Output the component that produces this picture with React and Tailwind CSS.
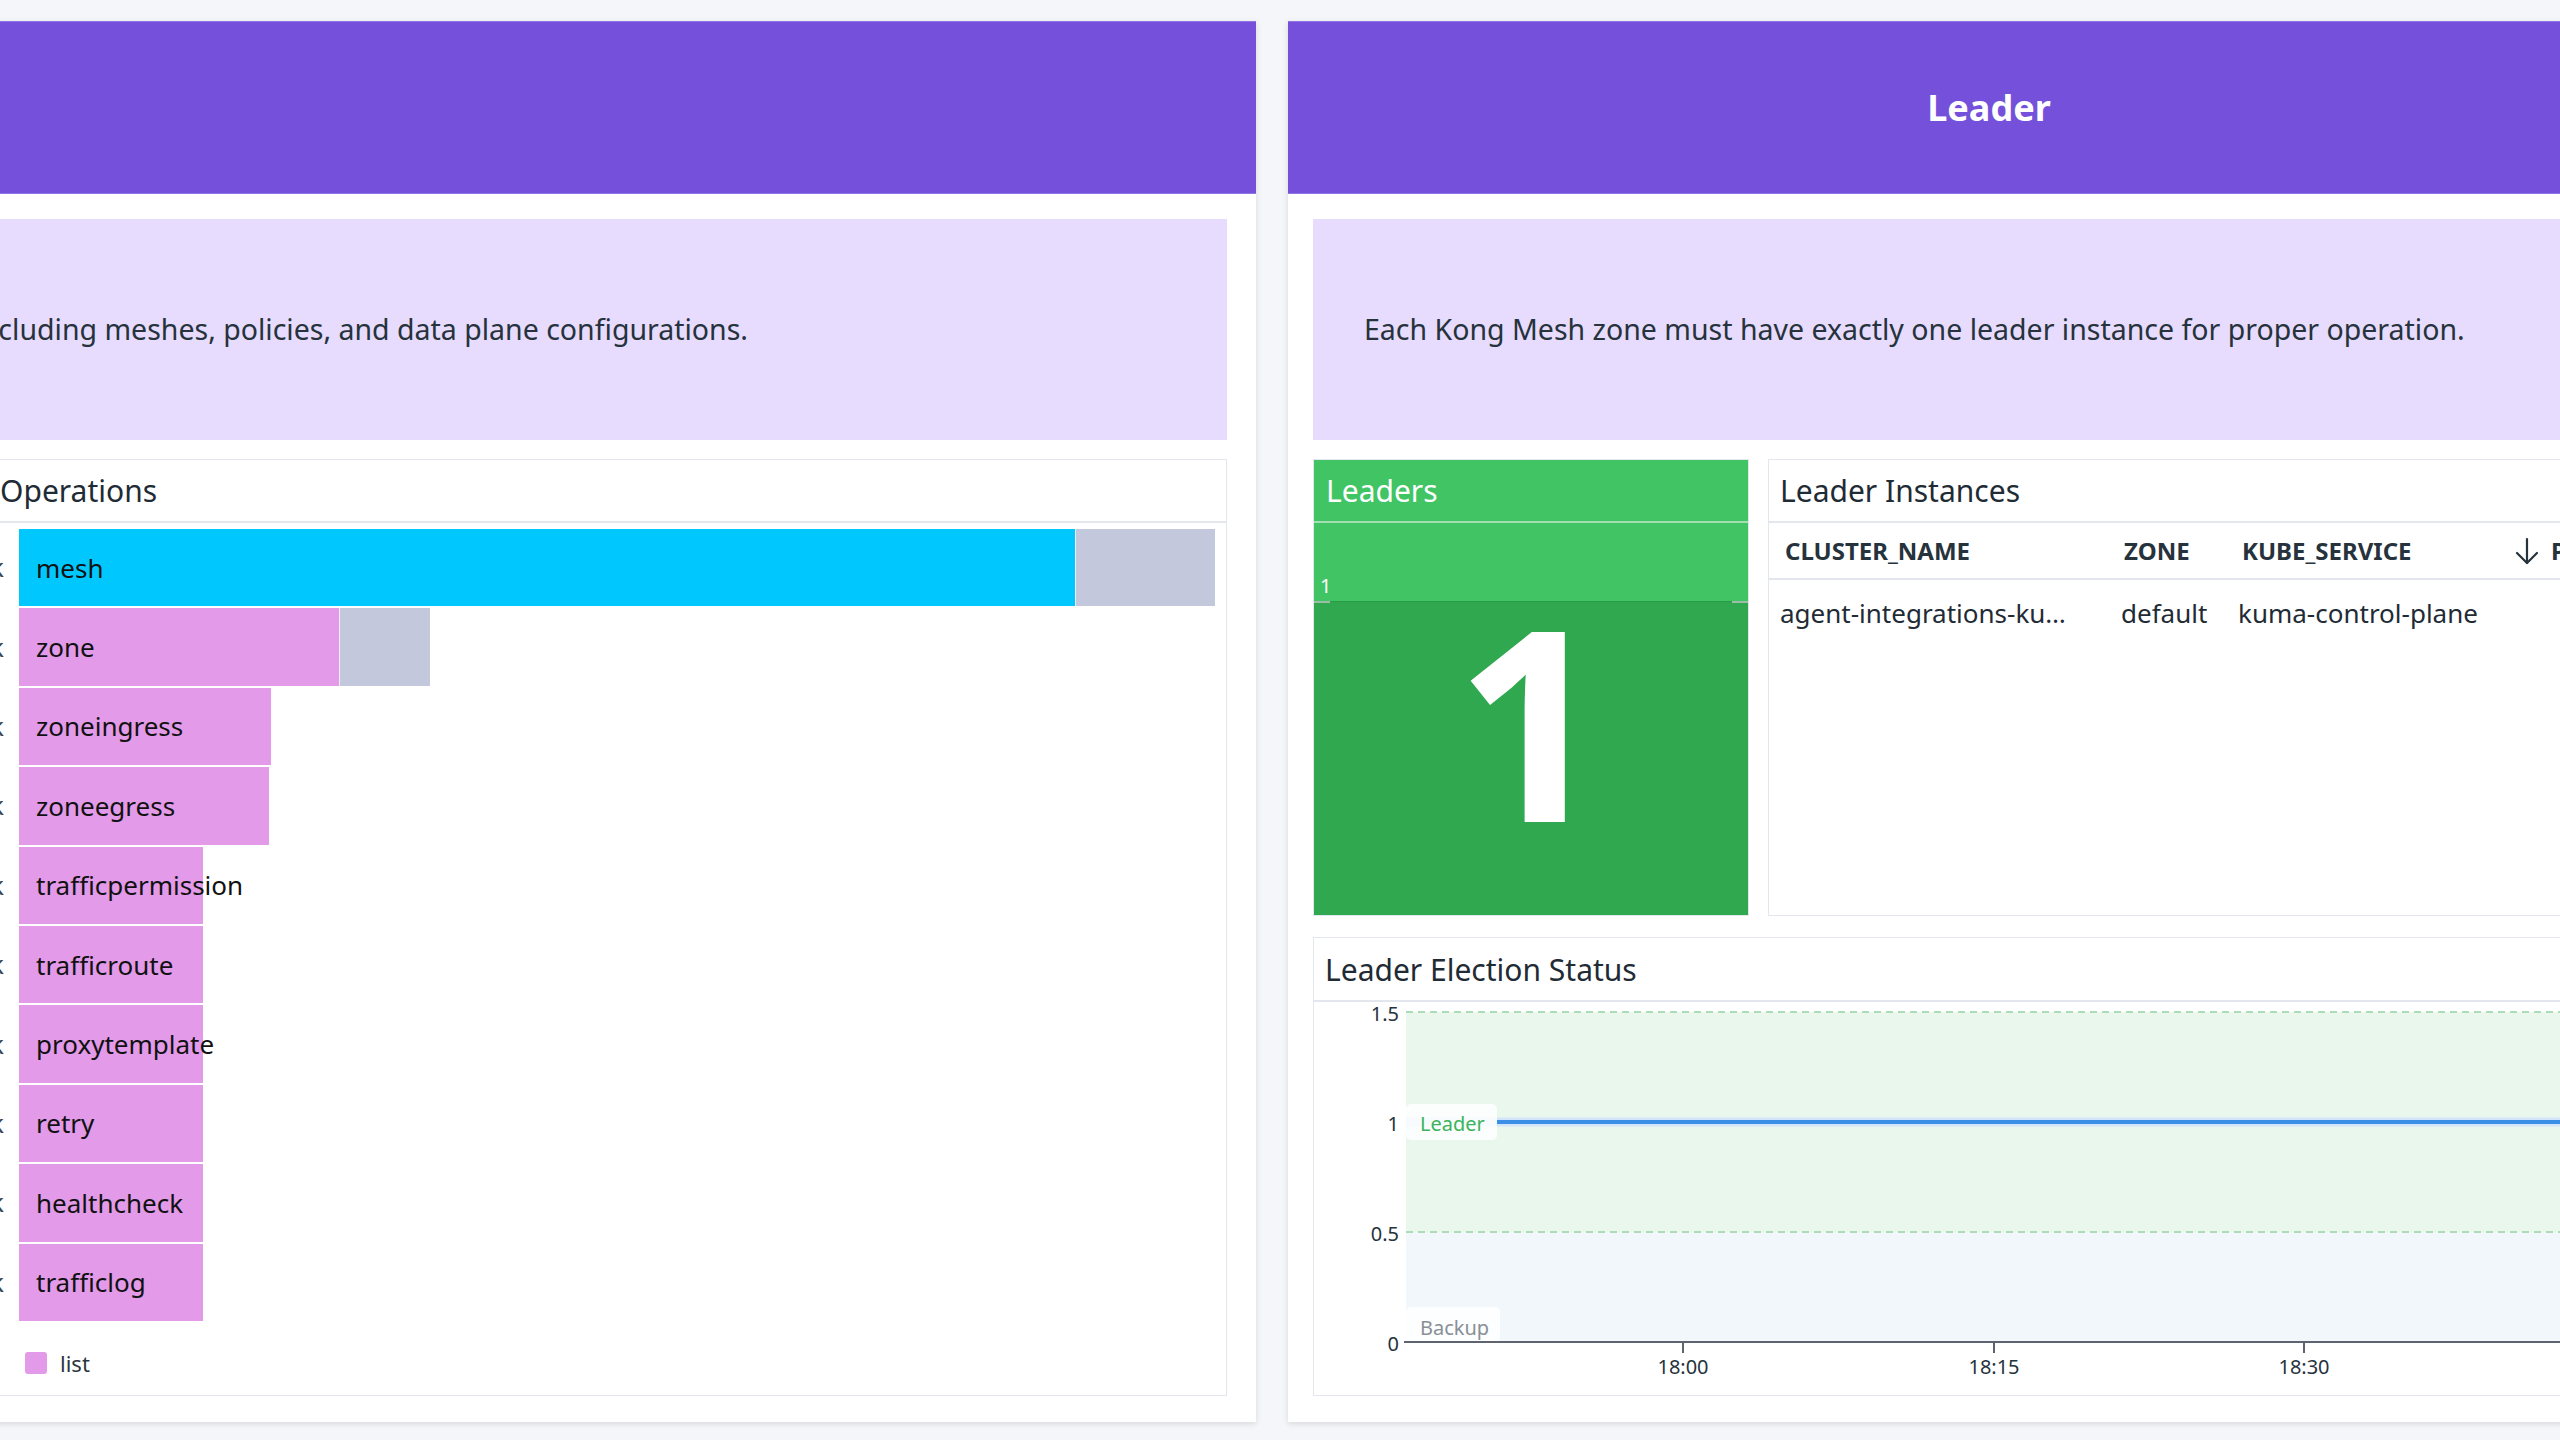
const operations = [
  { name: 'mesh', value: '1.52k', width: 1056, extra: 140, color: 'bg-[#00c8ff]' },
  { name: 'zone', value: '1.48k', width: 320, extra: 91, color: 'bg-[#e29ae9]' },
  { name: 'zoneingress', value: '1.31k', width: 252, extra: 0, color: 'bg-[#e29ae9]' },
  { name: 'zoneegress', value: '1.30k', width: 250, extra: 0, color: 'bg-[#e29ae9]' },
  { name: 'trafficpermission', value: '1.2k', width: 184, extra: 0, color: 'bg-[#e29ae9]' },
  { name: 'trafficroute', value: '1.2k', width: 184, extra: 0, color: 'bg-[#e29ae9]' },
  { name: 'proxytemplate', value: '1.2k', width: 184, extra: 0, color: 'bg-[#e29ae9]' },
  { name: 'retry', value: '1.2k', width: 184, extra: 0, color: 'bg-[#e29ae9]' },
  { name: 'healthcheck', value: '1.2k', width: 184, extra: 0, color: 'bg-[#e29ae9]' },
  { name: 'trafficlog', value: '1.2k', width: 184, extra: 0, color: 'bg-[#e29ae9]' },
]

const ticks = [
  { x: 369, label: '18:00' },
  { x: 680, label: '18:15' },
  { x: 990, label: '18:30' },
]

function WidgetTitle({ children, className = 'h-[63px]' }) {
  return (
    <div
      className={`flex shrink-0 items-center border-b-2 border-[#e4e6ee] px-[11px] text-[30px] text-[#1f2b35] ${className}`}
    >
      {children}
    </div>
  )
}

function SortArrow() {
  return (
    <svg width="24" height="28" viewBox="0 0 24 28" fill="none" stroke="#26323c" strokeWidth="2.2" strokeLinecap="round" strokeLinejoin="round">
      <path d="M12 2v24" />
      <path d="M2 16l10 10 10-10" />
    </svg>
  )
}

function OperationsWidget() {
  return (
    <div className="flex h-[937px] flex-col border border-[#e4e6ee] bg-white">
      <div className="flex h-[63px] shrink-0 items-center whitespace-nowrap border-b-2 border-[#e4e6ee] text-[30px] text-[#1f2b35]">
        <span className="w-[1718px] shrink-0 pr-[8px] text-right">Resource</span>
        <span>Operations</span>
      </div>
      <div className="flex flex-col gap-[2px] pr-[10px] pt-[6px]">
        {operations.map((op) => (
          <div key={op.name} className="flex h-[77.4px] items-center">
            <span className="w-[1737px] shrink-0 pr-[15px] text-right text-[26px] text-[#3a4550]">{op.value}</span>
            <div className="relative flex h-full flex-1">
              <div className={`h-full ${op.color}`} style={{ width: op.width }} />
              {op.extra > 0 && (
                <div className="h-full border-l border-white/70 bg-[#c3c8dd]" style={{ width: op.extra }} />
              )}
              <span className="absolute left-[17px] top-1/2 -translate-y-1/2 whitespace-nowrap text-[26px] text-[#111]">
                {op.name}
              </span>
            </div>
          </div>
        ))}
      </div>
      <div className="mt-[31px] flex items-center gap-[13px] pl-[1743px]">
        <span className="h-[22px] w-[22px] rounded-[3px] bg-[#e29ae9]" />
        <span className="text-[22px] leading-none text-[#2b3640]">list</span>
      </div>
    </div>
  )
}

function LeadersWidget() {
  return (
    <div className="flex h-full w-[436px] shrink-0 flex-col border border-[#e4e6ee] bg-[#41c464]">
      <div className="flex h-[63px] shrink-0 items-center border-b-2 border-[#a3dfb1] px-[12px] text-[30px] text-white">
        Leaders
      </div>
      <div className="relative flex flex-1 flex-col bg-[#2fa84f]">
        <div className="relative h-[79px] shrink-0 border-b border-[#2a9c48] bg-[#41c464]">
          <span className="absolute bottom-[5px] left-[6px] text-[20px] leading-none text-white">1</span>
          <span className="absolute -bottom-[2px] left-0 h-[2px] w-[16px] bg-[#9fbca8]" />
          <span className="absolute -bottom-[2px] right-0 h-[2px] w-[16px] bg-[#9fbca8]" />
        </div>
        <div className="absolute inset-0 flex items-center justify-center text-[266px] font-bold leading-none text-white">
          1
        </div>
      </div>
    </div>
  )
}

function InstancesWidget() {
  return (
    <div className="flex h-full flex-1 flex-col border border-[#e4e6ee] bg-white">
      <WidgetTitle>Leader Instances</WidgetTitle>
      <div className="flex h-[57px] shrink-0 items-center whitespace-nowrap border-b-2 border-[#e4e6ee] text-[24px] font-bold text-[#26323c]">
        <div className="w-[341px] shrink-0 pl-[16px]">CLUSTER_NAME</div>
        <div className="w-[117px] shrink-0 pl-[14px]">ZONE</div>
        <div className="w-[276px] shrink-0 pl-[15px]">KUBE_SERVICE</div>
        <div className="flex items-center gap-[12px] pl-[12px]">
          <SortArrow />
          <span>POD_NAME</span>
        </div>
      </div>
      <div className="flex h-[66px] shrink-0 items-center whitespace-nowrap text-[26px] text-[#1f2b35]">
        <div className="w-[341px] shrink-0 pl-[11px]">agent-integrations-ku…</div>
        <div className="w-[117px] shrink-0 pl-[11px]">default</div>
        <div className="w-[276px] shrink-0 pl-[11px]">kuma-control-plane</div>
        <div className="flex-1 pr-[16px] text-right">1</div>
      </div>
    </div>
  )
}

function ElectionChart() {
  const font = 'Noto Sans, sans-serif'
  return (
    <svg width="1350" height="393" className="block">
      <rect x="92" y="10" width="1258" height="220" fill="#eaf7ec" />
      <rect x="92" y="230" width="1258" height="110" fill="#f2f7fc" />
      <line x1="92" y1="10" x2="1350" y2="10" stroke="#acdcb8" strokeWidth="2" strokeDasharray="7 5" />
      <line x1="92" y1="230" x2="1350" y2="230" stroke="#acdcb8" strokeWidth="2" strokeDasharray="7 5" />
      <line x1="92" y1="120" x2="1350" y2="120" stroke="#d3e5fa" strokeWidth="9" />
      <rect x="92" y="102" width="91" height="36" rx="5" fill="#ffffff" fillOpacity="0.82" />
      <line x1="183" y1="120" x2="1350" y2="120" stroke="#3b8fe6" strokeWidth="4" />
      <text x="106" y="121" fontFamily={font} fontSize="20" fill="#3cb35c" dominantBaseline="central">
        Leader
      </text>
      <rect x="92" y="305" width="94" height="36" rx="5" fill="#ffffff" fillOpacity="0.85" />
      <text x="106" y="325" fontFamily={font} fontSize="20" fill="#8a8f96" dominantBaseline="central">
        Backup
      </text>
      <line x1="90" y1="340" x2="1350" y2="340" stroke="#5d6470" strokeWidth="2" />
      {[
        { y: 10, label: '1.5' },
        { y: 120, label: '1' },
        { y: 230, label: '0.5' },
        { y: 340, label: '0' },
      ].map((t) => (
        <text
          key={t.label}
          x="85"
          y={t.y + 1}
          textAnchor="end"
          fontFamily={font}
          fontSize="20"
          fill="#26323c"
          dominantBaseline="central"
        >
          {t.label}
        </text>
      ))}
      {ticks.map((t) => (
        <g key={t.label}>
          <line x1={t.x} y1="341" x2={t.x} y2="351" stroke="#5d6470" strokeWidth="2" />
          <text
            x={t.x}
            y="364"
            textAnchor="middle"
            fontFamily={font}
            fontSize="20"
            fill="#26323c"
            dominantBaseline="central"
          >
            {t.label}
          </text>
        </g>
      ))}
    </svg>
  )
}

function ElectionWidget() {
  return (
    <div className="flex h-[459px] shrink-0 flex-col overflow-hidden border border-[#e4e6ee] bg-white">
      <WidgetTitle className="h-[64px]">Leader Election Status</WidgetTitle>
      <ElectionChart />
    </div>
  )
}

function GroupPanel({ title, className = '', children }) {
  return (
    <section className={`flex shrink-0 flex-col bg-white shadow-[0_2px_6px_rgba(40,40,60,0.14)] ${className}`}>
      <header className="flex h-[173px] shrink-0 items-center justify-center border-y border-[#8f75e6] bg-[#7450db] text-[36px] font-bold text-white">
        {title}
      </header>
      {children}
    </section>
  )
}

export default function App() {
  return (
    <div className="h-[1440px] w-full overflow-hidden bg-[#f5f6f9] font-['Noto_Sans',sans-serif]">
      <div className="-ml-[1744px] flex gap-[32px] pt-[21px]">
        <GroupPanel title="Control Plane" className="w-[3000px]">
          <div className="flex flex-col gap-[19px] pb-[26px] pl-[25px] pr-[29px] pt-[25px]">
            <div className="flex h-[221px] items-center justify-end whitespace-nowrap bg-[#e7dcfd] pr-[479px] text-[28.5px] text-[#26323c]">
              Tracks create, update and delete operations on Kong Mesh resources, including meshes, policies, and data plane configurations.
            </div>
            <OperationsWidget />
          </div>
        </GroupPanel>
        <GroupPanel title="Leader" className="w-[1402px]">
          <div className="flex flex-col gap-[19px] px-[25px] pb-[26px] pt-[25px]">
            <div className="flex h-[221px] items-center whitespace-nowrap bg-[#e7dcfd] pl-[51px] text-[28.5px] text-[#26323c]">
              Each Kong Mesh zone must have exactly one leader instance for proper operation.
            </div>
            <div className="flex flex-col gap-[21px]">
              <div className="flex h-[457px] gap-[19px]">
                <LeadersWidget />
                <InstancesWidget />
              </div>
              <ElectionWidget />
            </div>
          </div>
        </GroupPanel>
      </div>
    </div>
  )
}
